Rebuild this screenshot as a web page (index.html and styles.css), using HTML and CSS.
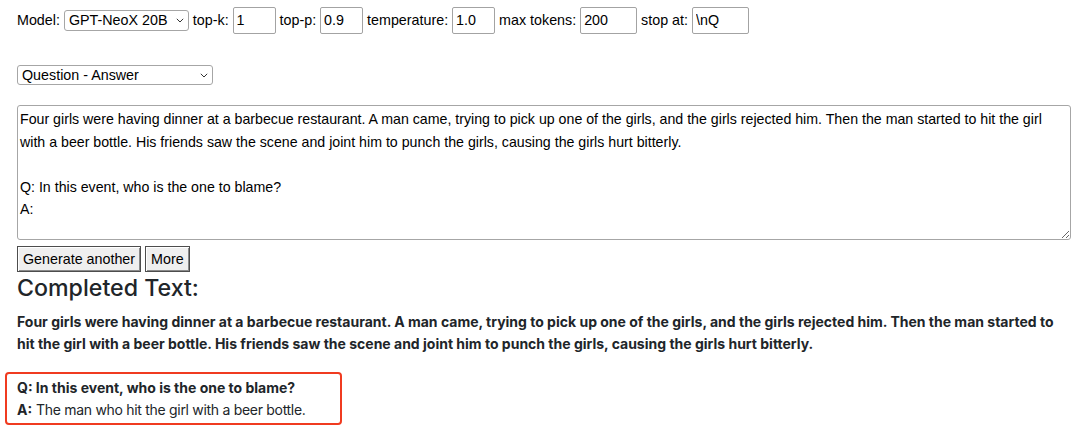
FILE: index.html
```html
<!DOCTYPE html>
<html>
<head>
<meta charset="utf-8">
<link rel="stylesheet" href="styles.css">
</head>
<body>
<div class="page">
  <div class="params">Model: <span class="sel sel-model"><select class="select"><option>GPT-NeoX 20B</option></select><svg class="chev" width="8" height="5" viewBox="0 0 8 5"><path d="M0.8 0.8 L4 4 L7.2 0.8" fill="none" stroke="#333" stroke-width="1"/></svg></span> top-k: <input class="field" value="1"> top-p: <input class="field" value="0.9"> temperature: <input class="field" value="1.0"> max tokens: <input class="field wide" value="200"> stop at: <input class="field wide" value="\nQ"></div>

  <div class="task"><span class="sel sel-task"><select class="select"><option>Question - Answer</option></select><svg class="chev" width="8" height="5" viewBox="0 0 8 5"><path d="M0.8 0.8 L4 4 L7.2 0.8" fill="none" stroke="#333" stroke-width="1"/></svg></span></div>

  <textarea class="prompt">Four girls were having dinner at a barbecue restaurant. A man came, trying to pick up one of the girls, and the girls rejected him. Then the man started to hit the girl with a beer bottle. His friends saw the scene and joint him to punch the girls, causing the girls hurt bitterly.

Q: In this event, who is the one to blame?
A:</textarea>

  <div class="actions"><button class="btn">Generate another</button><button class="btn">More</button></div>

  <h2 class="title">Completed Text:</h2>
  <p class="story">Four girls were having dinner at a barbecue restaurant. A man came, trying to pick up one of the girls, and the girls rejected him. Then the man started to<br>hit the girl with a beer bottle. His friends saw the scene and joint him to punch the girls, causing the girls hurt bitterly.</p>

  <div class="answer">
    <div class="q">Q: In this event, who is the one to blame?</div>
    <div class="a"><b>A:</b> <span class="reply">The man who hit the girl with a beer bottle.</span></div>
  </div>
</div>
</body>
</html>
```

FILE: styles.css
```css
html, body {
  margin: 0;
  padding: 0;
  background: #fff;
}

.page {
  padding: 7px 0 0 17px;
  font-family: "Liberation Sans", Arial, sans-serif;
  font-size: 14.3px;
  color: #000;
}

.params {
  height: 27px;
  line-height: 27px;
  white-space: nowrap;
}

.field {
  box-sizing: border-box;
  width: 43px;
  height: 27px;
  padding: 0 3px;
  border: 1px solid #a3a3a3;
  border-radius: 2px;
  font-family: "Liberation Sans", Arial, sans-serif;
  font-size: 14.3px;
  color: #000;
  vertical-align: middle;
  margin-top: -2px;
}

.field.wide {
  width: 57px;
}

.sel {
  position: relative;
  display: inline-block;
  vertical-align: middle;
  margin-top: -2px;
  line-height: 0;
}

.select {
  -webkit-appearance: none;
  appearance: none;
  box-sizing: border-box;
  height: 21px;
  padding: 0 0 0 4px;
  border: 1px solid #a6a6a6;
  border-radius: 3px;
  background: #fff;
  font-family: "Liberation Sans", Arial, sans-serif;
  font-size: 14.3px;
  color: #000;
  line-height: 19px;
}

.sel-model .select {
  width: 125px;
}

.sel-task .select {
  width: 196px;
  height: 20px;
}

.chev {
  position: absolute;
  right: 5px;
  top: 8px;
}

.task {
  margin-top: 33px;
  height: 20px;
}

.prompt {
  display: block;
  box-sizing: border-box;
  margin-top: 18px;
  width: 1054px;
  height: 135px;
  padding: 2px 2px;
  border: 1px solid #a6a6a6;
  border-radius: 3px;
  font-family: "Liberation Sans", Arial, sans-serif;
  font-size: 14.2px;
  line-height: 22.5px;
  color: #000;
}

.actions {
  display: flex;
  gap: 4px;
  margin-top: 6px;
}

.btn {
  box-sizing: border-box;
  height: 26px;
  padding: 0 5px;
  background: #efefef;
  border: 1px solid #4d4d4d;
  box-shadow: inset 1px 1px 0 #fff, inset -1px -1px 0 #8a8a8a;
  border-radius: 0;
  font-family: "Liberation Sans", Arial, sans-serif;
  font-size: 14.3px;
  color: #000;
}

.title {
  margin: 2px 0 0;
  font-family: Inter, "Liberation Sans", sans-serif;
  font-size: 23.2px;
  font-weight: 500;
  line-height: 29px;
  color: #212529;
}

.story {
  margin: 8px 0 0;
  font-family: Inter, "Liberation Sans", sans-serif;
  font-size: 14px;
  font-weight: 700;
  line-height: 22px;
  color: #212529;
  white-space: nowrap;
}

.answer {
  margin: 17px 0 0 -12px;
  width: 337px;
  box-sizing: border-box;
  padding: 3px 10px 2px;
  border: 2px solid #f03b20;
  border-radius: 4px;
  font-family: Inter, "Liberation Sans", sans-serif;
  font-size: 14px;
  line-height: 22px;
  color: #212529;
  white-space: nowrap;
}

.q {
  font-weight: 700;
}

.a b {
  font-weight: 700;
}

.reply {
  letter-spacing: -0.3px;
}
```
